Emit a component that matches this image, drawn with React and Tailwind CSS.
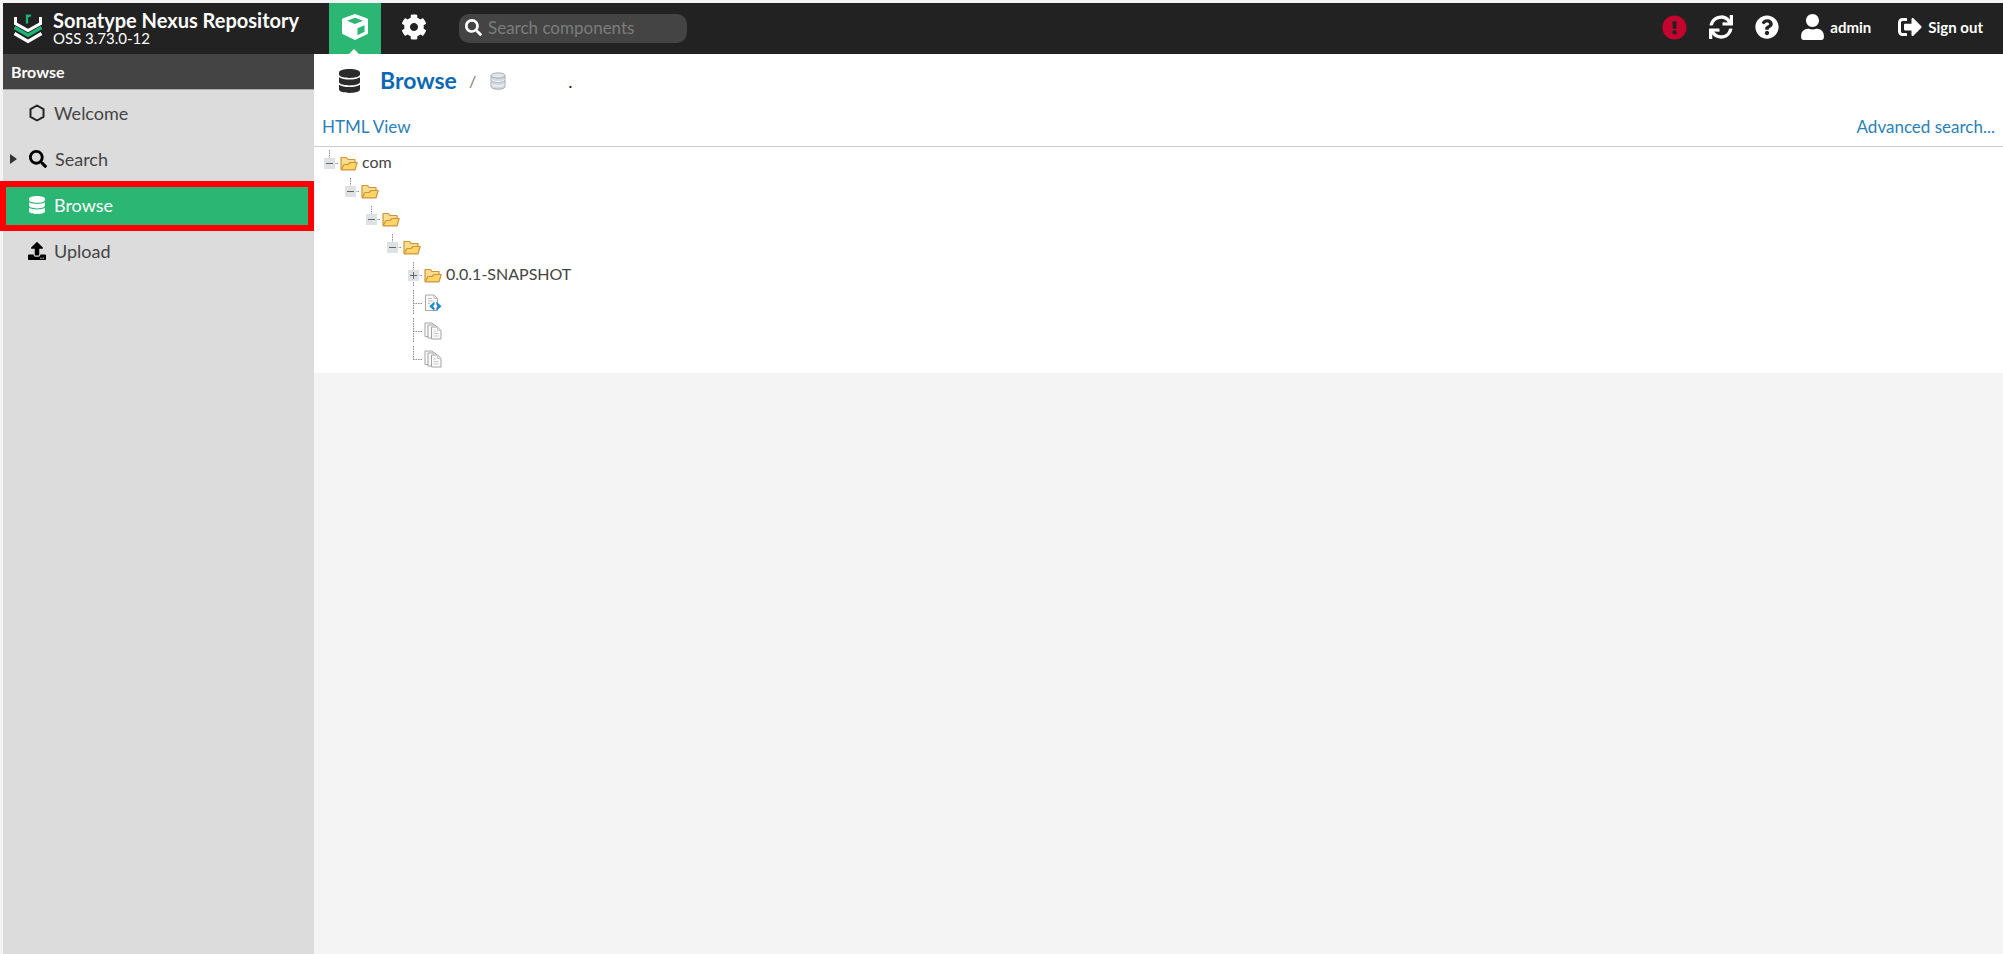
import {
  FaCog,
  FaDatabase,
  FaExclamationCircle,
  FaQuestionCircle,
  FaSearch,
  FaSignOutAlt,
  FaSync,
  FaUpload,
  FaUser,
} from "react-icons/fa";

function Logo() {
  return (
    <svg viewBox="0 0 30 32" className="h-8 w-[30px] shrink-0" fill="none" aria-hidden="true">
      <path d="M2.500 4v6.500L15 17.500l12.500-7V4" stroke="#fff" strokeWidth="3" />
      <path d="M1.500 14.500l13.500 7.800 13.500-7.800" stroke="#1cb573" strokeWidth="3.400" />
      <path d="M1.500 20.500l13.500 8 13.500-8" stroke="#fff" strokeWidth="3.200" />
      <path d="M14 10.500V1.500M14 6c0-2.800 1.700-3.800 4-3.300" stroke="#1cb573" strokeWidth="2.200" />
    </svg>
  );
}

function Cube() {
  return (
    <svg viewBox="0 0 26 26" className="size-[26px]" aria-hidden="true">
      <path d="M13 0.500L25.500 5v14.500L13 25.500 0.500 19.500V5z" fill="#fff" stroke="#fff" strokeLinejoin="round" />
      <path d="M13 3.800l8 2.900-8 3.200-8-3.200z" fill="#2bb673" />
      <path d="M15.500 14.200l7-3v6.600l-7 3.500z" fill="#2bb673" />
    </svg>
  );
}

function Hexagon() {
  return (
    <svg viewBox="0 0 18 18" className="size-[18px]" fill="none" aria-hidden="true">
      <path d="M9 1.500l6.500 3.700v7.600L9 16.500l-6.500-3.700V5.200z" stroke="#222" strokeWidth="2" strokeLinejoin="round" />
    </svg>
  );
}

function SmallDatabase() {
  return (
    <svg viewBox="0 0 16 18" className="h-[18px] w-4" aria-hidden="true">
      <path d="M1 3.500v11C1 16 4 17.200 8 17.200s7-1.200 7-2.700v-11z" fill="#d3d9df" stroke="#a3abb3" />
      <ellipse cx="8" cy="3.500" rx="7" ry="2.600" fill="#e2e7eb" stroke="#a3abb3" />
      <path d="M1.500 7.600c1 1.300 3.500 1.900 6.500 1.900s5.500-.6 6.500-1.900M1.500 12.200c1 1.300 3.500 1.900 6.500 1.900s5.500-.6 6.500-1.900" stroke="#fafbfc" fill="none" />
      <path d="M1.500 8.600c1 1.300 3.500 1.900 6.500 1.900s5.500-.6 6.500-1.900" stroke="#a3abb3" strokeWidth=".7" fill="none" />
    </svg>
  );
}

function Folder() {
  return (
    <svg viewBox="0 0 18 15" className="h-[15px] w-[18px] shrink-0" strokeLinejoin="round" aria-hidden="true">
      <path d="M1 13V1.500h5.500l1.500 2h7V13z" fill="#f8dd8c" stroke="#cf943c" strokeWidth="1.200" />
      <path d="M1.200 13.800L4 8.500h4l2-2h7.200l-2.200 7.300z" fill="#ffd666" stroke="#cf943c" strokeWidth="1.200" />
    </svg>
  );
}

function CodeFile() {
  return (
    <svg viewBox="0 0 18 18" className="size-[18px] shrink-0" aria-hidden="true">
      <path d="M1.500 1h8.500l3.500 3.500V16.500h-12z" fill="#fafafa" stroke="#a8a8a8" />
      <path d="M10 1v3.500h3.500M4 4.500h4M4 7h5M4 9.500h2" stroke="#bdbdbd" fill="none" />
      <path d="M10.500 7.500v3L9 12.300l1.500 1.700v3L5.300 12.300zM12.300 7.500v3l1.500 1.800-1.500 1.700v3l5.200-4.700z" fill="#1e88cf" />
    </svg>
  );
}

function Files() {
  return (
    <svg viewBox="0 0 18 18" className="size-[18px] shrink-0" aria-hidden="true">
      <g fill="#fafafa" stroke="#a3a3a3">
        <path d="M1 1h7l2 2v11.500H1z" />
        <path d="M4 3h7l2 2v11H4z" />
        <path d="M7.500 5h6l3.500 3.500v8.500H7.500z" />
      </g>
      <path d="M13.500 5v3.500H17M9.500 9h2.500M9.500 11.500h5M9.500 14h5" stroke="#c9c9c9" fill="none" />
    </svg>
  );
}

function Elbow({ kind }) {
  const box = kind === "minus" || kind === "plus";
  return (
    <svg viewBox="0 0 17 28" className="h-7 w-[17px] shrink-0" fill="none" aria-hidden="true">
      <path
        d={kind === "minus" ? "M6.500 1v8" : kind === "end" ? "M6.500 1v14" : "M6.500 1v25"}
        stroke="#8a8a8a"
        strokeDasharray="1.500 1"
      />
      <path d="M6 14.500h10" stroke="#8a8a8a" strokeDasharray="1.500 1" />
      {box && <path d="M1 9h11v11H1z" fill="#dfe2e5" />}
      {box && <path d="M3 14.500h7" stroke="#666" />}
      {kind === "plus" && <path d="M6.500 11v7" stroke="#666" />}
    </svg>
  );
}

const rows = [
  { indent: "pl-[9px]", kind: "minus", Icon: Folder, label: "com" },
  { indent: "pl-[30px]", kind: "minus", Icon: Folder },
  { indent: "pl-[51px]", kind: "minus", Icon: Folder },
  { indent: "pl-[72px]", kind: "minus", Icon: Folder },
  { indent: "pl-[93px]", kind: "plus", Icon: Folder, label: "0.0.1-SNAPSHOT" },
  { indent: "pl-[93px]", kind: "tee", Icon: CodeFile },
  { indent: "pl-[93px]", kind: "tee", Icon: Files },
  { indent: "pl-[93px]", kind: "end", Icon: Files },
];

function Header() {
  return (
    <header className="flex h-[51px] items-center bg-[#222] text-white">
      <div className="flex w-[326px] shrink-0 items-center gap-[10px] pl-[10px]">
        <Logo />
        <div className="pb-[2px] whitespace-nowrap">
          <h1 className="text-xl leading-5 font-bold">Sonatype Nexus Repository</h1>
          <p className="text-[15px] leading-4">OSS 3.73.0-12</p>
        </div>
      </div>
      <button aria-label="Browse" className="relative flex h-full w-[52px] items-center justify-center bg-[#2bb673] pb-[3px]">
        <Cube />
        <svg viewBox="0 0 10 5" className="absolute bottom-0 left-5 h-[5px] w-[10px]" aria-hidden="true">
          <path d="M0 5l5-5 5 5z" fill="#fff" />
        </svg>
      </button>
      <button aria-label="Administration" className="flex h-full w-[66px] items-center justify-center pb-[3px]">
        <FaCog className="size-[26px]" />
      </button>
      <label className="ml-3 flex h-[29px] w-[228px] items-center gap-[6px] rounded-[10px] bg-[#444] pb-[2px] pl-[6px]">
        <FaSearch className="size-[17px] shrink-0" />
        <input
          aria-label="Search components"
          placeholder="Search components"
          className="w-full min-w-0 bg-transparent text-[17px] outline-none placeholder:text-[#7c7c7c]"
        />
      </label>
      <div className="ml-auto flex items-center pr-5 pb-[3px] text-[15px] font-bold">
        <button aria-label="System health" className="mr-[22px] text-[#c3042f]">
          <FaExclamationCircle className="size-[25px]" />
        </button>
        <button aria-label="Refresh" className="mr-[22px]">
          <FaSync className="size-6" />
        </button>
        <button aria-label="Help" className="mr-[22px]">
          <FaQuestionCircle className="size-6" />
        </button>
        <button className="mr-[27px] flex items-center gap-[6px]">
          <FaUser className="h-[26px] w-[23px]" />
          admin
        </button>
        <button className="flex items-center gap-[6px]">
          <FaSignOutAlt className="size-6" />
          Sign out
        </button>
      </div>
    </header>
  );
}

function Sidebar() {
  const link = "flex h-[46px] items-center gap-2 pl-[25px]";
  return (
    <nav className="w-[311px] shrink-0 bg-[#dcdcdc] text-lg text-[#444]">
      <h2 className="flex h-9 items-center border-b border-[#aaa] bg-[#444] pl-2 text-base font-bold text-white">
        Browse
      </h2>
      <a href="#welcome" className={link}>
        <Hexagon />
        Welcome
      </a>
      <a href="#search" className="flex h-[46px] items-center pl-[7px]">
        <svg viewBox="0 0 8 12" className="mr-[11px] h-3 w-2" aria-hidden="true">
          <path d="M0 1l7 5-7 5z" fill="#333" />
        </svg>
        <FaSearch className="mr-2 size-[18px] text-black" />
        Search
      </a>
      <a href="#browse" className="relative flex h-[46px] items-center gap-2 bg-[#2bb673] pl-[25px] text-white">
        <FaDatabase className="size-[18px]" />
        Browse
        <span className="absolute -top-px -bottom-[3px] right-0 -left-[3px] border-6 border-[#fe0000]" />
      </a>
      <a href="#upload" className={link}>
        <FaUpload className="size-[18px] text-black" />
        Upload
      </a>
    </nav>
  );
}

export default function App() {
  return (
    <div className="flex min-h-screen flex-col bg-[#f4f4f4] pt-[3px] pl-[3px] font-[Lato,sans-serif]">
      <Header />
      <div className="flex grow">
        <Sidebar />
        <main className="min-w-0 grow">
          <div className="bg-white">
            <div className="flex h-[54px] items-center pl-[25px]">
              <FaDatabase className="h-6 w-[21px] text-[#2b2b2b]" />
              <h2 className="ml-5 pb-[2px] text-[23px] font-bold">
                <a href="#browse" className="text-[#0b68b5]">Browse</a>
              </h2>
              <span className="ml-3 text-base text-[#777]">/</span>
              <span className="mr-[62px] ml-[14px]">
                <SmallDatabase />
              </span>
              <span className="text-lg text-[#222]">.</span>
            </div>
            <div className="flex h-[39px] items-center justify-between border-b border-[#ccc] pr-2 pl-2 text-[17px] text-[#2b7fb8]">
              <a href="#html-view">HTML View</a>
              <a href="#advanced">Advanced search...</a>
            </div>
            <ul className="pt-[2px] text-base text-[#444]">
              {rows.map(({ indent, kind, Icon, label }, i) => (
                <li key={i} className={`flex h-7 items-center ${indent}`}>
                  <Elbow kind={kind} />
                  <Icon />
                  {label && <span className="ml-1 pb-[2px]">{label}</span>}
                </li>
              ))}
            </ul>
          </div>
        </main>
      </div>
    </div>
  );
}
